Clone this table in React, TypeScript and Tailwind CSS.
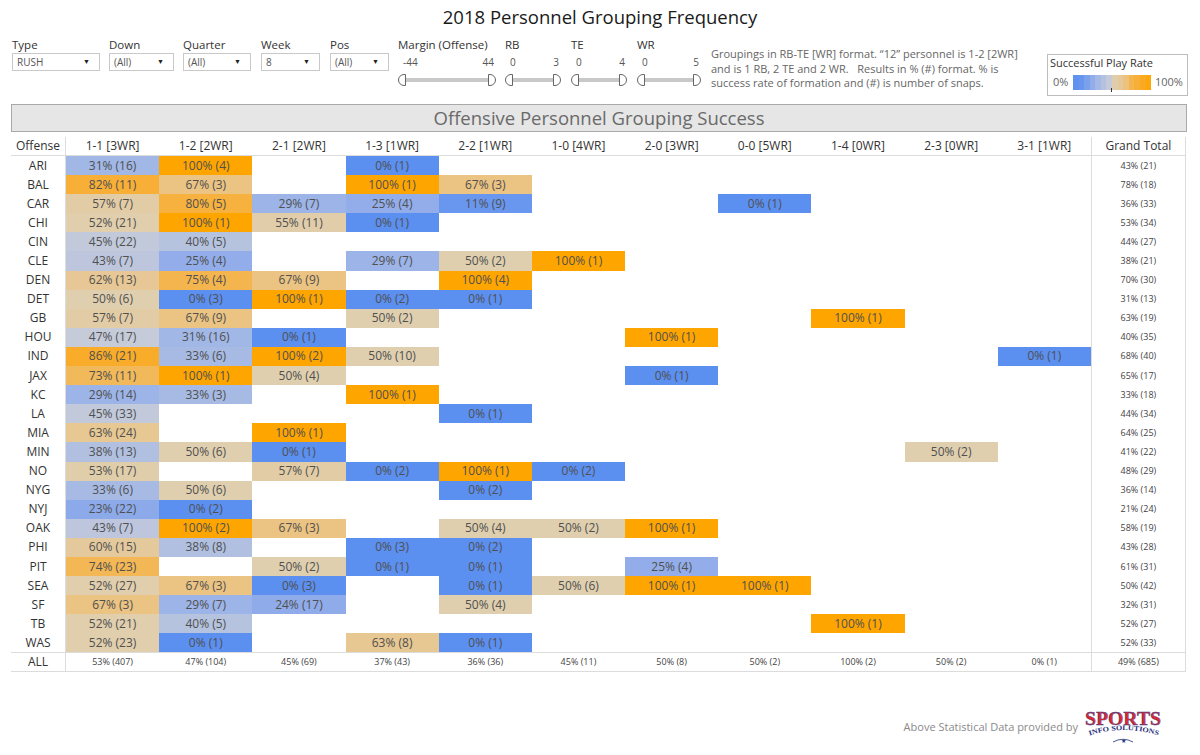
import React from "react";

const columns = [
  "1-1 [3WR]",
  "1-2 [2WR]",
  "2-1 [2WR]",
  "1-3 [1WR]",
  "2-2 [1WR]",
  "1-0 [4WR]",
  "2-0 [3WR]",
  "0-0 [5WR]",
  "1-4 [0WR]",
  "2-3 [0WR]",
  "3-1 [1WR]",
];

type Row = { team: string; cells: string[]; total: string };

// "pct snaps", empty string = no snaps
const rows: Row[] = [
  { team: "ARI", cells: ["31 16", "100 4", "", "0 1"], total: "43 21" },
  { team: "BAL", cells: ["82 11", "67 3", "", "100 1", "67 3"], total: "78 18" },
  { team: "CAR", cells: ["57 7", "80 5", "29 7", "25 4", "11 9", "", "", "0 1"], total: "36 33" },
  { team: "CHI", cells: ["52 21", "100 1", "55 11", "0 1"], total: "53 34" },
  { team: "CIN", cells: ["45 22", "40 5"], total: "44 27" },
  { team: "CLE", cells: ["43 7", "25 4", "", "29 7", "50 2", "100 1"], total: "38 21" },
  { team: "DEN", cells: ["62 13", "75 4", "67 9", "", "100 4"], total: "70 30" },
  { team: "DET", cells: ["50 6", "0 3", "100 1", "0 2", "0 1"], total: "31 13" },
  { team: "GB", cells: ["57 7", "67 9", "", "50 2", "", "", "", "", "100 1"], total: "63 19" },
  { team: "HOU", cells: ["47 17", "31 16", "0 1", "", "", "", "100 1"], total: "40 35" },
  { team: "IND", cells: ["86 21", "33 6", "100 2", "50 10", "", "", "", "", "", "", "0 1"], total: "68 40" },
  { team: "JAX", cells: ["73 11", "100 1", "50 4", "", "", "", "0 1"], total: "65 17" },
  { team: "KC", cells: ["29 14", "33 3", "", "100 1"], total: "33 18" },
  { team: "LA", cells: ["45 33", "", "", "", "0 1"], total: "44 34" },
  { team: "MIA", cells: ["63 24", "", "100 1"], total: "64 25" },
  { team: "MIN", cells: ["38 13", "50 6", "0 1", "", "", "", "", "", "", "50 2"], total: "41 22" },
  { team: "NO", cells: ["53 17", "", "57 7", "0 2", "100 1", "0 2"], total: "48 29" },
  { team: "NYG", cells: ["33 6", "50 6", "", "", "0 2"], total: "36 14" },
  { team: "NYJ", cells: ["23 22", "0 2"], total: "21 24" },
  { team: "OAK", cells: ["43 7", "100 2", "67 3", "", "50 4", "50 2", "100 1"], total: "58 19" },
  { team: "PHI", cells: ["60 15", "38 8", "", "0 3", "0 2"], total: "43 28" },
  { team: "PIT", cells: ["74 23", "", "50 2", "0 1", "0 1", "", "25 4"], total: "61 31" },
  { team: "SEA", cells: ["52 27", "67 3", "0 3", "", "0 1", "50 6", "100 1", "100 1"], total: "50 42" },
  { team: "SF", cells: ["67 3", "29 7", "24 17", "", "50 4"], total: "32 31" },
  { team: "TB", cells: ["52 21", "40 5", "", "", "", "", "", "", "100 1"], total: "52 27" },
  { team: "WAS", cells: ["52 23", "0 1", "", "63 8", "0 1"], total: "52 33" },
];

const allRow = ["53 407", "47 104", "45 69", "37 43", "36 36", "45 11", "50 8", "50 2", "100 2", "50 2", "0 1"];

const stops: [number, number[]][] = [
  [0, [91, 143, 240]],
  [0.12, [106, 151, 238]],
  [0.25, [146, 173, 233]],
  [0.33, [166, 186, 228]],
  [0.47, [198, 203, 218]],
  [0.5, [223, 207, 175]],
  [0.58, [226, 203, 165]],
  [0.67, [235, 195, 130]],
  [0.75, [244, 181, 78]],
  [0.86, [249, 172, 42]],
  [1, [255, 165, 0]],
];

function colorFor(p: number) {
  for (let i = 1; i < stops.length; i++) {
    const [x0, c0] = stops[i - 1];
    const [x1, c1] = stops[i];
    if (p <= x1) {
      const t = (p - x0) / (x1 - x0);
      const c = c0.map((v, k) => Math.round(v + (c1[k] - v) * t));
      return `rgb(${c.join(",")})`;
    }
  }
  return "rgb(255,165,0)";
}

function parse(s: string) {
  const [pct, n] = s.split(" ");
  return { pct: Number(pct), label: `${pct}% (${n})` };
}

const Dropdown = ({ label, value, width }: { label: string; value: string; width: string }) => (
  <div className={`flex flex-col ${width}`}>
    <div className="text-[11.5px] leading-[14px] text-[#333]">{label}</div>
    <div className="mt-[1px] h-[18px] border border-[#c9c9c9] bg-white flex items-center justify-between pl-[4px] pr-[9px] text-[10px] text-[#555]">
      <span>{value}</span>
      <span className="text-[7px] text-[#222]">▼</span>
    </div>
  </div>
);

const RangeSlider = ({ label, min, max, width }: { label: string; min: string; max: string; width: string }) => (
  <div className={`flex flex-col ${width}`}>
    <div className="text-[11.5px] leading-[14px] text-[#333] whitespace-nowrap">{label}</div>
    <div className="flex justify-between pl-[5px] pr-[2px] mt-[3px] text-[10px] leading-[14px] text-[#555]">
      <span>{min}</span>
      <span>{max}</span>
    </div>
    <div className="flex items-center mt-[5px] h-[12px]">
      <div className="w-[8px] h-[12px] border border-[#666] rounded-l-full bg-white shrink-0" />
      <div className="flex-1 h-[4px] bg-[#c8c8c8]" />
      <div className="w-[8px] h-[12px] border border-[#666] rounded-r-full bg-white shrink-0" />
    </div>
  </div>
);

const DataCell = ({ value }: { value?: string }) => {
  if (!value) return <div className="w-[93.18px] shrink-0" />;
  const { pct, label } = parse(value);
  return (
    <div
      className="w-[93.18px] shrink-0 flex items-center justify-center text-[12px] leading-[16px] text-[#505050]"
      style={{ backgroundColor: colorFor(pct / 100) }}
    >
      {label}
    </div>
  );
};

const SisLogo = () => (
  <svg width="78" height="34" viewBox="0 0 78 34">
    <defs>
      <path id="sis-arc" d="M4,27 Q39,15 76,27" />
    </defs>
    <text
      x="39"
      y="16"
      textAnchor="middle"
      fontFamily="'Liberation Serif', serif"
      fontWeight="bold"
      fontSize="19"
      fill="#dc2630"
      stroke="#2c3d8a"
      strokeWidth="0.45"
      textLength="76"
      lengthAdjust="spacingAndGlyphs"
    >
      SPORTS
    </text>
    <text fontFamily="'Liberation Serif', serif" fontWeight="bold" fontSize="7" fill="#1f2f7c">
      <textPath href="#sis-arc" startOffset="50%" textAnchor="middle" textLength="70" lengthAdjust="spacingAndGlyphs">
        INFO SOLUTIONS
      </textPath>
    </text>
    <path d="M29,33 Q39,27.5 49,33" stroke="#1f2f7c" fill="none" strokeWidth="0.8" />
    <text x="39" y="33.5" textAnchor="middle" fontSize="6" fill="#1f2f7c">
      ★
    </text>
  </svg>
);

export default function App() {
  return (
    <div className="w-[1200px] h-[755px] bg-white font-['Open_Sans','Liberation_Sans',sans-serif] overflow-hidden">
      <div className="h-[38px] pt-[5px] text-center text-[18.5px] leading-[24px] text-[#1a1a1a]">
        2018 Personnel Grouping Frequency
      </div>

      <div className="flex items-start h-[66px] pl-[12px]">
        <Dropdown label="Type" value="RUSH" width="w-[88px]" />
        <div className="ml-[9px]">
          <Dropdown label="Down" value="(All)" width="w-[65px]" />
        </div>
        <div className="ml-[9px]">
          <Dropdown label="Quarter" value="(All)" width="w-[68px]" />
        </div>
        <div className="ml-[10px]">
          <Dropdown label="Week" value="8" width="w-[59px]" />
        </div>
        <div className="ml-[10px]">
          <Dropdown label="Pos" value="(All)" width="w-[59px]" />
        </div>
        <div className="ml-[9px]">
          <RangeSlider label="Margin (Offense)" min="-44" max="44" width="w-[98px]" />
        </div>
        <div className="ml-[9px]">
          <RangeSlider label="RB" min="0" max="3" width="w-[56px]" />
        </div>
        <div className="ml-[10px]">
          <RangeSlider label="TE" min="0" max="4" width="w-[56px]" />
        </div>
        <div className="ml-[10px]">
          <RangeSlider label="WR" min="0" max="5" width="w-[64px]" />
        </div>
        <p className="ml-[10px] mt-[9px] w-[322px] text-[11px] leading-[14.5px] text-[#666]">
          Groupings in RB-TE [WR] format. “12” personnel is 1-2 [2WR] and is 1 RB, 2 TE and 2 WR.&nbsp;&nbsp; Results in % (#)
          format. % is success rate of formation and (#) is number of snaps.
        </p>
        <div className="ml-[14px] mt-[16px] w-[141px] h-[42px] border border-[#bdbdbd] px-[2px]">
          <div className="text-[11px] leading-[14px] text-[#333] mt-[1px]">Successful Play Rate</div>
          <div className="flex items-center mt-[4px] text-[11px] text-[#666]">
            <span className="ml-[3px] w-[20px]">0%</span>
            <div className="relative flex h-[15px] w-[78px]">
              {Array.from({ length: 14 }).map((_, i) => (
                <div key={i} className="flex-1" style={{ backgroundColor: colorFor((i + 0.5) / 14) }} />
              ))}
              <div className="absolute left-[38px] top-[13px] w-[1px] h-[4px] bg-[#333]" />
            </div>
            <span className="ml-[4px]">100%</span>
          </div>
        </div>
      </div>

      <div className="mx-[11px] w-[1176px] h-[28px] bg-[#e6e6e6] border border-[#a9a9a9] flex items-center justify-center text-[18.5px] text-[#6a6a6a]">
        Offensive Personnel Grouping Success
      </div>

      <div className="mt-[5px] ml-[11px] w-[1175px]">
        <div className="flex h-[19px] border-b border-[#dcdcdc] text-[12px] leading-[16px] text-[#333]">
          <div className="w-[55px] shrink-0 border-r border-[#dcdcdc] flex items-center justify-center">Offense</div>
          {columns.map((c) => (
            <div key={c} className="w-[93.18px] shrink-0 flex items-center justify-center">
              {c}
            </div>
          ))}
          <div className="w-[95px] shrink-0 border-x border-[#dcdcdc] flex items-center justify-center">Grand Total</div>
        </div>

        {rows.map((r) => (
          <div key={r.team} className="flex h-[19.1px]">
            <div className="w-[55px] shrink-0 border-r border-[#dcdcdc] flex items-center justify-center text-[12px] leading-[16px] text-[#333]">
              {r.team}
            </div>
            {columns.map((_, i) => (
              <DataCell key={i} value={r.cells[i]} />
            ))}
            <div className="w-[95px] shrink-0 border-x border-[#dcdcdc] flex items-center justify-center text-[9px] leading-[12px] text-[#444]">
              {parse(r.total).label}
            </div>
          </div>
        ))}

        <div className="flex h-[20px] border-y border-[#dcdcdc] text-[9px] leading-[12px] text-[#444]">
          <div className="w-[55px] shrink-0 border-r border-[#dcdcdc] flex items-center justify-center text-[12px] leading-[16px] text-[#333]">
            ALL
          </div>
          {allRow.map((v, i) => (
            <div key={i} className="w-[93.18px] shrink-0 flex items-center justify-center">
              {parse(v).label}
            </div>
          ))}
          <div className="w-[95px] shrink-0 border-x border-[#dcdcdc] flex items-center justify-center">
            {parse("49 685").label}
          </div>
        </div>
      </div>

      <div className="mt-[37px] flex justify-end items-center pr-[38px] h-[34px]">
        <span className="text-[11px] text-[#8a8a8a] mr-[6px] mt-[2px]">Above Statistical Data provided by</span>
        <SisLogo />
      </div>
    </div>
  );
}
